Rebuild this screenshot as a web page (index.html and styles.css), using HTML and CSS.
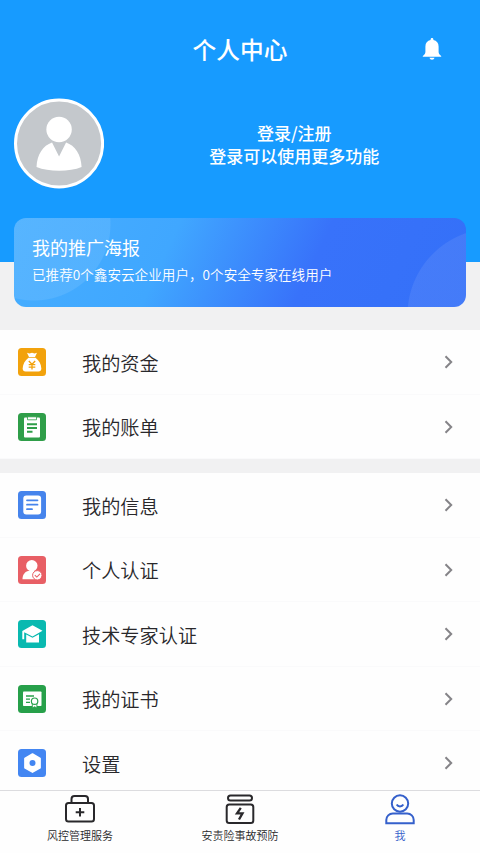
FILE: index.html
```html
<!DOCTYPE html>
<html lang="zh-CN">
<head>
    <meta charset="UTF-8">
    <meta name="viewport" content="width=device-width, initial-scale=1.0">
    <title>个人中心</title>
    <link rel="stylesheet" href="styles.css">
</head>
<body>
    <div class="page">
        <header class="header">
            <div class="title-bar">
                <h1>个人中心</h1>
                <svg class="bell" viewBox="0 0 20 24" fill="#fff">
                    <path d="M10 1c.9 0 1.400.6 1.400 1.500v.6c3.300.7 5.200 3.100 5.200 6.400v5.200c0 1.800.8 3.100 2.600 4.200v.8H.8v-.8c1.800-1.100 2.600-2.400 2.600-4.200V9.500c0-3.300 1.900-5.700 5.200-6.400v-.6C8.600 1.600 9.100 1 10 1z"/>
                    <path d="M7.500 20.700h5c-.3 1.200-1.200 2-2.500 2s-2.200-.8-2.500-2z"/>
                </svg>
            </div>
            <div class="profile">
                <svg class="avatar" viewBox="0 0 90 90">
                    <circle cx="45" cy="45" r="43.500" fill="#c4c8cc" stroke="#fff" stroke-width="3"/>
                    <circle cx="45" cy="31" r="12.700" fill="#fff"/>
                    <path d="M38 44l7 14 7-14c9 3 15 12 15.500 24.500-12 5-33 5-45 0C23 56 29 47 38 44z" fill="#fff"/>
                </svg>
                <div class="login">
                    <p>登录/注册</p>
                    <p>登录可以使用更多功能</p>
                </div>
            </div>
        </header>

        <section class="banner">
            <h2>我的推广海报</h2>
            <p>已推荐0个鑫安云企业用户，0个安全专家在线用户</p>
        </section>

        <ul class="menu">
            <li class="menu-item">
                <svg class="icon" viewBox="0 0 28 28">
                    <rect width="28" height="28" rx="3.500" fill="#f2a20c"/>
                    <path d="M9 4.800l2.400.8L14 4.800l2.600.8 2.400-.8-2 4.200h-6z" fill="#fff"/>
                    <path d="M10.500 9.800h7c3.500 2.700 5.800 6.700 5.800 10.700 0 2-1 3-2.800 3h-13c-1.800 0-2.800-1-2.800-3 0-4 2.300-8 5.800-10.700z" fill="#fff"/>
                    <path d="M10.800 13l3.200 3.300 3.200-3.300M14 16.300v5.200M10.700 16.700h6.600M10.700 19.200h6.600" fill="none" stroke="#f2a20c" stroke-width="1.300"/>
                </svg>
                <span>我的资金</span>
                <svg class="arrow" viewBox="0 0 10 14"><path d="M1.500 1.300L7.200 7l-5.700 5.700"/></svg>
            </li>
            <li class="menu-item">
                <svg class="icon" viewBox="0 0 28 28">
                    <rect width="28" height="28" rx="3.500" fill="#2f9e49"/>
                    <rect x="6" y="4.500" width="16" height="20" rx="1" fill="#fff"/>
                    <path d="M9.500 3.800h9v3h-9z" fill="#fff" stroke="#2f9e49" stroke-width=".8"/>
                    <path d="M9 11.200h10M9 15h10M9 18.800h5.500" stroke="#2f9e49" stroke-width="1.900"/>
                </svg>
                <span>我的账单</span>
                <svg class="arrow" viewBox="0 0 10 14"><path d="M1.500 1.300L7.200 7l-5.700 5.700"/></svg>
            </li>
        </ul>

        <ul class="menu">
            <li class="menu-item">
                <svg class="icon" viewBox="0 0 28 28">
                    <rect width="28" height="28" rx="3.500" fill="#4684ec"/>
                    <rect x="5.300" y="4.500" width="17.800" height="19" rx="3" fill="#fff"/>
                    <path d="M9 9.300h10.500M9 13.700h10.500M9 18.200h5" stroke="#4684ec" stroke-width="1.800" stroke-linecap="round"/>
                </svg>
                <span>我的信息</span>
                <svg class="arrow" viewBox="0 0 10 14"><path d="M1.500 1.300L7.200 7l-5.700 5.700"/></svg>
            </li>
            <li class="menu-item">
                <svg class="icon" viewBox="0 0 28 28">
                    <rect width="28" height="28" rx="3.500" fill="#e85f65"/>
                    <circle cx="13.800" cy="9.800" r="5.700" fill="#fff"/>
                    <path d="M10 15h7.500l4 8.300H4.500C4.500 19 6.500 16 10 15z" fill="#fff"/>
                    <circle cx="19.300" cy="19.300" r="4.700" fill="#fff" stroke="#e85f65" stroke-width="1"/>
                    <path d="M16.800 19.200l2 1.900 3.200-3.300" fill="none" stroke="#e85f65" stroke-width="1.100"/>
                </svg>
                <span>个人认证</span>
                <svg class="arrow" viewBox="0 0 10 14"><path d="M1.500 1.300L7.200 7l-5.700 5.700"/></svg>
            </li>
            <li class="menu-item">
                <svg class="icon" viewBox="0 0 28 28">
                    <rect width="28" height="28" rx="3.500" fill="#09b9b0"/>
                    <path d="M14.500 5.200l10 5.600-10 5.700-8.300-4.300v7H4.300v-8.200z" fill="#fff"/>
                    <path d="M8.200 14.500l6.300 3.300 6.500-3.500v8.200H8.200z" fill="#fff"/>
                </svg>
                <span>技术专家认证</span>
                <svg class="arrow" viewBox="0 0 10 14"><path d="M1.500 1.300L7.200 7l-5.700 5.700"/></svg>
            </li>
            <li class="menu-item">
                <svg class="icon" viewBox="0 0 28 28">
                    <rect width="28" height="28" rx="3.500" fill="#27a04a"/>
                    <rect x="5" y="6.500" width="18.500" height="14.500" rx=".8" fill="#fff"/>
                    <path d="M8 11h8M8 14.200h4M8 17.300h4" stroke="#27a04a" stroke-width="1.300"/>
                    <path d="M14.300 18h4.600v5l-2.300-1.200-2.300 1.200z" fill="#fff" stroke="#27a04a" stroke-width=".9"/>
                    <circle cx="16.600" cy="16.200" r="3.200" fill="#fff" stroke="#27a04a" stroke-width="1.200"/>
                </svg>
                <span>我的证书</span>
                <svg class="arrow" viewBox="0 0 10 14"><path d="M1.500 1.300L7.200 7l-5.700 5.700"/></svg>
            </li>
            <li class="menu-item">
                <svg class="icon" viewBox="0 0 28 28">
                    <rect width="28" height="28" rx="3.500" fill="#4386f2"/>
                    <path d="M14.500 5l7.600 4.400v9.400l-7.600 4.400-7.600-4.400V9.400z" fill="#fff" stroke="#fff" stroke-width="1.500" stroke-linejoin="round"/>
                    <circle cx="14.500" cy="14.100" r="3" fill="#4386f2"/>
                </svg>
                <span>设置</span>
                <svg class="arrow" viewBox="0 0 10 14"><path d="M1.500 1.300L7.200 7l-5.700 5.700"/></svg>
            </li>
        </ul>

        <nav class="tab-bar">
            <a class="tab">
                <svg viewBox="0 0 32 32">
                    <rect x="2" y="10" width="28" height="18.500" rx="2.500"/>
                    <path d="M7.500 10V6A3 3 0 0 1 10.500 3h10.500a3 3 0 0 1 3 3v4M16 15v8.500M11.700 19.200h8.600"/>
                </svg>
                <span>风控管理服务</span>
            </a>
            <a class="tab">
                <svg viewBox="0 0 32 32">
                    <rect x="4" y="2.500" width="24" height="5" rx="2.500"/>
                    <rect x="2.700" y="11.500" width="26.600" height="18.500" rx="2.500"/>
                    <path d="M16.800 14.800L13 20.300h5.500L15 26.500" stroke-width="2.300"/>
                </svg>
                <span>安责险事故预防</span>
            </a>
            <a class="tab active">
                <svg viewBox="0 0 32 32">
                    <circle cx="16" cy="10.500" r="8.200"/>
                    <path d="M12.700 11.500c1.400 2.600 5.200 2.600 6.600 0M2.300 30.300V27a6.500 6.500 0 0 1 6.500-6.500h14.400a6.500 6.500 0 0 1 6.500 6.500v3.300z"/>
                </svg>
                <span>我</span>
            </a>
        </nav>
    </div>
</body>
</html>
```
FILE: styles.css
```css
/* styles.css */

* {
    box-sizing: border-box;
    margin: 0;
    padding: 0;
}

body {
    font-family: "Noto Sans CJK SC", sans-serif;
    background-color: #f1f1f2;
    color: #29282b;
}

.page {
    height: 853px;
    display: flex;
    flex-direction: column;
    overflow: hidden;
}

.header {
    height: 262px;
    flex-shrink: 0;
    background-color: #179bff;
    color: #fff;
}

.title-bar {
    display: grid;
    grid-template-columns: 1fr auto 1fr;
    align-items: center;
    height: 98px;
    padding: 0 38px;
}

.title-bar h1 {
    grid-column: 2;
    font-size: 23.7px;
    font-weight: 500;
}

.bell {
    width: 20px;
    height: 24px;
    justify-self: end;
}

.profile {
    display: flex;
    height: 91px;
    padding-left: 13.5px;
}

.avatar {
    width: 91px;
    height: 91px;
}

.login {
    width: 380px;
    padding: 23px 0 0 5px;
    text-align: center;
    font-size: 17px;
    font-weight: 500;
    line-height: 23px;
}

/* Banner overlaps the bottom of the header */
.banner {
    height: 89px;
    flex-shrink: 0;
    margin: -44px 14px 23px;
    padding: 16px 18px;
    border-radius: 12px;
    color: #fff;
    background:
        radial-gradient(circle at 20px 6px, rgba(255, 255, 255, 0.09) 0 76px, transparent 77px),
        radial-gradient(circle at 480px 97px, rgba(255, 255, 255, 0.08) 0 86px, transparent 87px),
        linear-gradient(115deg, #46aeff 0%, #40a7ff 34%, #3872fa 65%, #3470f8 100%);
}

.banner h2 {
    font-size: 18px;
    font-weight: 400;
    line-height: 26px;
}

.banner p {
    margin-top: 4px;
    font-size: 13.6px;
    font-weight: 350;
    line-height: 20px;
    white-space: nowrap;
}

.menu {
    flex-shrink: 0;
    margin-bottom: 14px;
    background-color: #fefefe;
    list-style: none;
}

.menu-item {
    display: flex;
    align-items: center;
    height: 64.5px;
    padding: 1px 26px 0 18px;
    border-bottom: 1px solid #fafafb;
    font-size: 19.2px;
}

.menu-item span {
    flex: 1;
    margin-left: 36px;
    padding-top: 1px;
    font-weight: 350;
}

.icon {
    width: 28px;
    height: 28px;
}

.arrow {
    width: 10px;
    height: 14px;
    fill: none;
    stroke: #858488;
    stroke-width: 2;
}

/* Bottom navigation stays above the end of the list */
.tab-bar {
    display: flex;
    height: 63px;
    flex-shrink: 0;
    margin-top: -19.5px;
    background-color: #fefefe;
    border-top: 1px solid #dcdcdf;
}

.tab {
    flex: 1;
    display: flex;
    flex-direction: column;
    align-items: center;
    padding-top: 2px;
    font-size: 11px;
    font-weight: 350;
    line-height: 16px;
}

.tab svg {
    width: 32px;
    height: 32px;
    margin-bottom: 2px;
    fill: none;
    stroke: currentColor;
    stroke-width: 2;
}

.tab.active {
    color: #3560cb;
}
```
